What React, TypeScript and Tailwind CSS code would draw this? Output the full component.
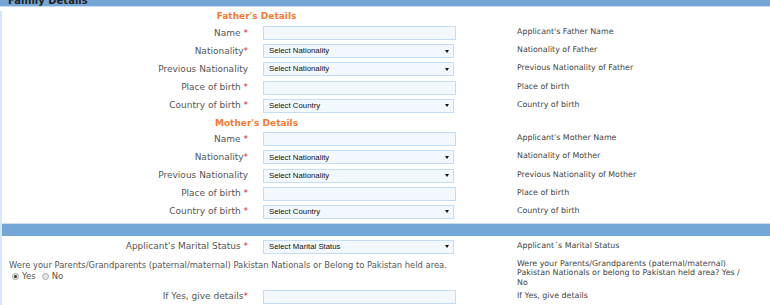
import React from "react";

const FONT = "font-['DejaVu_Sans',Verdana,sans-serif]";

function Arrow() {
  return (
    <svg width="4" height="3" viewBox="0 0 4 3" className="shrink-0">
      <path d="M0 0 H4 L2 3 Z" fill="#111" />
    </svg>
  );
}

function TextInput() {
  return <div className="h-[14px] w-[193px] border border-[#c2ddf5] bg-[#f3f8fe]" />;
}

function Select({ text }: { text: string }) {
  return (
    <div className="flex h-[14px] w-[191px] items-center justify-between border border-[#c2ddf5] bg-[#f3f8fe] pl-[5px] pr-[4px]">
      <span className="font-['Liberation_Sans',Arial,sans-serif] text-[7.8px] leading-none text-[#111]">{text}</span>
      <Arrow />
    </div>
  );
}

type RowProps = {
  label: string;
  req?: "space" | "tight";
  field: React.ReactNode;
  help: string;
};

function Row({ label, req, field, help }: RowProps) {
  return (
    <div className="flex h-[18.17px] items-center">
      <div className="w-[246px] whitespace-nowrap text-right text-[9px] leading-none text-[#555]">
        {label}
        {req && <span className="text-[#e2262b]">{req === "space" ? " *" : "*"}</span>}
      </div>
      <div className="ml-[15px] w-[193px]">{field}</div>
      <div className="ml-[61px] -mt-[2px] whitespace-nowrap text-[7.9px] leading-none text-[#444]">{help}</div>
    </div>
  );
}

function Heading({ children, cls }: { children: string; cls: string }) {
  return (
    <div className={`w-[509px] text-center text-[9px] font-bold leading-[11px] h-[11px] text-[#f47a32] ${cls}`}>
      {children}
    </div>
  );
}

function Radio({ checked }: { checked?: boolean }) {
  return (
    <span className="flex h-[7px] w-[7px] items-center justify-center rounded-full border border-[#a9a9a9] bg-[#e6e6e6]">
      {checked && <span className="h-[3px] w-[3px] rounded-full bg-[#333]" />}
    </span>
  );
}

export default function App() {
  return (
    <div className={`h-[305px] w-[770px] overflow-hidden bg-white ${FONT}`}>
      <div className="h-[7px] overflow-hidden border-b border-[#c6dbef] bg-[#74a6d6]">
        <div className="-mt-[5.5px] pl-[8px] text-[10px] font-bold leading-[12px] text-[#222]">Family Details</div>
      </div>
      <div className="border-l-2 border-[#d3e8fb]">
        <Heading cls="mt-[4px] mb-[2px]">Father's Details</Heading>
        <Row label="Name" req="space" field={<TextInput />} help="Applicant's Father Name" />
        <Row label="Nationality" req="tight" field={<Select text="Select Nationality" />} help="Nationality of Father" />
        <Row label="Previous Nationality" field={<Select text="Select Nationality" />} help="Previous Nationality of Father" />
        <Row label="Place of birth" req="space" field={<TextInput />} help="Place of birth" />
        <Row label="Country of birth" req="space" field={<Select text="Select Country" />} help="Country of birth" />

        <Heading cls="mt-[3px] mb-[1.4px]">Mother's Details</Heading>
        <Row label="Name" req="space" field={<TextInput />} help="Applicant's Mother Name" />
        <Row label="Nationality" req="tight" field={<Select text="Select Nationality" />} help="Nationality of Mother" />
        <Row label="Previous Nationality" field={<Select text="Select Nationality" />} help="Previous Nationality of Mother" />
        <Row label="Place of birth" req="space" field={<TextInput />} help="Place of birth" />
        <Row label="Country of birth" req="space" field={<Select text="Select Country" />} help="Country of birth" />

        <div className="mt-[1.6px] h-[13px] border-t border-[#c9def1] bg-[#74a6d6]" />

        <div className="mt-[2px]">
          <Row
            label="Applicant's Marital Status"
            req="space"
            field={<Select text="Select Marital Status" />}
            help="Applicant´s Marital Status"
          />
        </div>

        <div className="mt-[3px] flex">
          <div className="w-[515px] pl-[7px]">
            <div className="whitespace-nowrap text-[8.4px] leading-[12px] text-[#555]">
              Were your Parents/Grandparents (paternal/maternal) Pakistan Nationals or Belong to Pakistan held area.
            </div>
            <div className="flex h-[12px] items-center pl-[3px] text-[8.5px] leading-none text-[#555]">
              <Radio checked />
              <span className="ml-[3px]">Yes</span>
              <span className="ml-[6px]">
                <Radio />
              </span>
              <span className="ml-[3px]">No</span>
            </div>
          </div>
          <div className="w-[228px] text-[7.9px] leading-[9.7px] text-[#444]">
            Were your Parents/Grandparents (paternal/maternal) Pakistan Nationals or belong to Pakistan held area? Yes / No
          </div>
        </div>

        <Row label="If Yes, give details" req="tight" field={<TextInput />} help="If Yes, give details" />
      </div>
    </div>
  );
}
